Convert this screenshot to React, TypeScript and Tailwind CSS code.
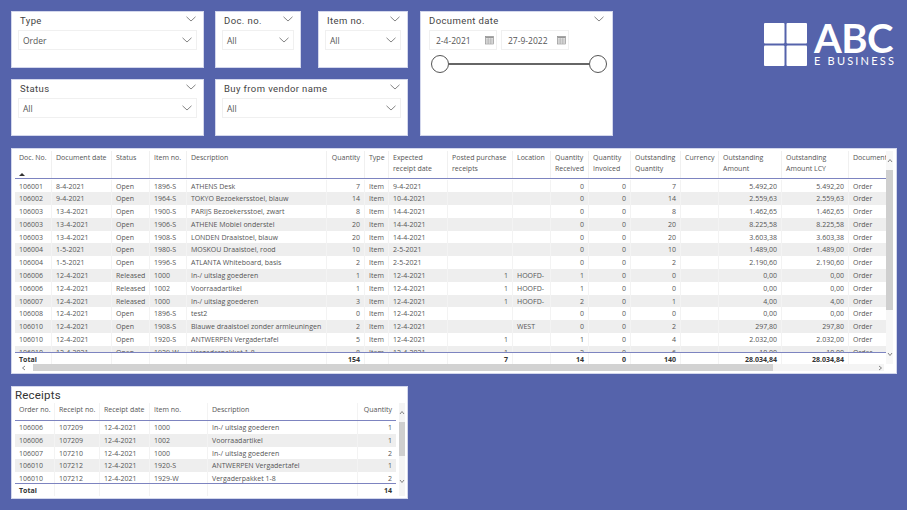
import React from "react";

const mainCols = "grid grid-cols-[37px_60px_38px_37px_140px_38px_24px_59px_65px_38px_38px_42px_50px_38px_63px_67px_37px]";
const receiptCols = "grid grid-cols-[40px_45px_50px_58px_150px_38px]";

// r = right aligned column
const mainHeader = [
  { t: "Doc. No." },
  { t: "Document date" },
  { t: "Status" },
  { t: "Item no." },
  { t: "Description" },
  { t: "Quantity", r: true },
  { t: "Type" },
  { t: "Expected receipt date" },
  { t: "Posted purchase receipts" },
  { t: "Location" },
  { t: "Quantity Received" },
  { t: "Quantity Invoiced" },
  { t: "Outstanding Quantity" },
  { t: "Currency" },
  { t: "Outstanding Amount" },
  { t: "Outstanding Amount LCY" },
  { t: "Document" },
];
const mainRight = [5, 8, 10, 11, 12, 14, 15];

const mainRows = [
  ["106001", "8-4-2021", "Open", "1896-S", "ATHENS Desk", "7", "Item", "9-4-2021", "", "", "0", "0", "7", "", "5.492,20", "5.492,20", "Order"],
  ["106002", "9-4-2021", "Open", "1964-S", "TOKYO Bezoekersstoel, blauw", "14", "Item", "10-4-2021", "", "", "0", "0", "14", "", "2.559,63", "2.559,63", "Order"],
  ["106003", "13-4-2021", "Open", "1900-S", "PARIJS Bezoekersstoel, zwart", "8", "Item", "14-4-2021", "", "", "0", "0", "8", "", "1.462,65", "1.462,65", "Order"],
  ["106003", "13-4-2021", "Open", "1906-S", "ATHENE Mobiel onderstel", "20", "Item", "14-4-2021", "", "", "0", "0", "20", "", "8.225,58", "8.225,58", "Order"],
  ["106003", "13-4-2021", "Open", "1908-S", "LONDEN Draaistoel, blauw", "20", "Item", "14-4-2021", "", "", "0", "0", "20", "", "3.603,38", "3.603,38", "Order"],
  ["106004", "1-5-2021", "Open", "1980-S", "MOSKOU Draaistoel, rood", "10", "Item", "2-5-2021", "", "", "0", "0", "10", "", "1.489,00", "1.489,00", "Order"],
  ["106004", "1-5-2021", "Open", "1996-S", "ATLANTA Whiteboard, basis", "2", "Item", "2-5-2021", "", "", "0", "0", "2", "", "2.190,60", "2.190,60", "Order"],
  ["106006", "12-4-2021", "Released", "1000", "In-/ uitslag goederen", "1", "Item", "12-4-2021", "1", "HOOFD-", "1", "0", "0", "", "0,00", "0,00", "Order"],
  ["106006", "12-4-2021", "Released", "1002", "Voorraadartikel", "1", "Item", "12-4-2021", "1", "HOOFD-", "1", "0", "0", "", "0,00", "0,00", "Order"],
  ["106007", "12-4-2021", "Released", "1000", "In-/ uitslag goederen", "3", "Item", "12-4-2021", "1", "HOOFD-", "2", "0", "1", "", "4,00", "4,00", "Order"],
  ["106008", "12-4-2021", "Open", "1896-S", "test2", "0", "Item", "12-4-2021", "", "", "0", "0", "0", "", "0,00", "0,00", "Order"],
  ["106010", "12-4-2021", "Open", "1908-S", "Blauwe draaistoel zonder armleuningen", "2", "Item", "12-4-2021", "", "WEST", "0", "0", "2", "", "297,80", "297,80", "Order"],
  ["106010", "12-4-2021", "Open", "1920-S", "ANTWERPEN Vergadertafel", "5", "Item", "12-4-2021", "1", "", "1", "0", "4", "", "2.032,00", "2.032,00", "Order"],
  ["106010", "12-4-2021", "Open", "1929-W", "Vergaderpakket 1-8", "8", "Item", "12-4-2021", "1", "", "2", "0", "6", "", "10,00", "10,00", "Order"],
];
const mainTotal = ["Total", "", "", "", "", "154", "", "", "7", "", "14", "0", "140", "", "28.034,84", "28.034,84", ""];

const receiptHeader = ["Order no.", "Receipt no.", "Receipt date", "Item no.", "Description", "Quantity"];
const receiptRows = [
  ["106006", "107209", "12-4-2021", "1000", "In-/ uitslag goederen", "1"],
  ["106006", "107209", "12-4-2021", "1002", "Voorraadartikel", "1"],
  ["106007", "107210", "12-4-2021", "1000", "In-/ uitslag goederen", "2"],
  ["106010", "107212", "12-4-2021", "1920-S", "ANTWERPEN Vergadertafel", "1"],
  ["106010", "107212", "12-4-2021", "1929-W", "Vergaderpakket 1-8", "2"],
];
const receiptTotal = ["Total", "", "", "", "", "14"];

function Chevron({ className = "" }: { className?: string }) {
  return (
    <svg viewBox="0 0 10 6" className={`w-[10px] h-[6px] shrink-0 ${className}`} fill="none" stroke="#777" strokeWidth="0.9">
      <polyline points="0.5,0.8 5,5 9.5,0.8" />
    </svg>
  );
}

function Arrow({ dir }: { dir: "up" | "down" | "left" | "right" }) {
  const pts = {
    up: "1,4 3,1.5 5,4",
    down: "1,2 3,4.5 5,2",
    left: "4,1 1.5,3 4,5",
    right: "2,1 4.5,3 2,5",
  }[dir];
  return (
    <svg viewBox="0 0 6 6" className="w-[6px] h-[6px]" fill="none" stroke="#666" strokeWidth="0.8">
      <polyline points={pts} />
    </svg>
  );
}

function CalendarIcon() {
  return (
    <svg viewBox="0 0 9 9" className="w-[9px] h-[9px] shrink-0" fill="none" stroke="#888" strokeWidth="0.6">
      <rect x="0.5" y="0.5" width="8" height="7.5" fill="#e8e8e8" />
      <rect x="0.5" y="0.5" width="8" height="1.6" fill="#999" stroke="none" />
      <path d="M3.2 2.1v5.9M5.8 2.1v5.9M0.5 4h8M0.5 6h8" strokeWidth="0.4" />
    </svg>
  );
}

function Slicer({ label, value, className }: { label: string; value: string; className: string }) {
  return (
    <div className={`bg-white border border-[#d3d7ec] h-[57px] px-[6px] ${className}`}>
      <div className="flex items-start justify-between h-[18px] pt-[2px] pl-[2px] pr-[1px]">
        <span className="text-[9.5px] leading-[14px] tracking-[0.4px] text-[#444] font-['Roboto',sans-serif]">{label}</span>
        <Chevron className="mt-[2px]" />
      </div>
      <div className="flex items-center justify-between h-[20px] border border-[#f0f0f0] pl-[4px] pr-[4px]">
        <span className="text-[8.5px] leading-[12px] pt-[1px] text-[#555]">{value}</span>
        <Chevron />
      </div>
    </div>
  );
}

function Cell({ text, right, bold, last }: { text: string; right?: boolean; bold?: boolean; last?: boolean }) {
  return (
    <div
      className={`px-[4px] overflow-hidden whitespace-nowrap leading-[13px] ${right ? "text-right" : ""} ${bold ? "font-bold text-[#333]" : ""} ${last ? "" : "border-r border-[#f3f3f3]"}`}
    >
      {text}
    </div>
  );
}

function BodyRows({ rows, cols, right }: { rows: string[][]; cols: string; right: number[] }) {
  return (
    <>
      {rows.map((row, i) => (
        <div key={i} className={`${cols} h-[12.8px] ${i % 2 === 1 ? "bg-[#eeeeee]" : "bg-white"}`}>
          {row.map((v, j) => (
            <Cell key={j} text={v} right={right.includes(j)} last={j === row.length - 1} />
          ))}
        </div>
      ))}
    </>
  );
}

function DateBox({ value }: { value: string }) {
  return (
    <div className="w-[68px] h-[20px] border border-[#f0f0f0] flex items-center justify-between pl-[6px] pr-[2px]">
      <span className="text-[8.5px] leading-[12px] pt-[1px] text-[#555]">{value}</span>
      <CalendarIcon />
    </div>
  );
}

function Logo() {
  return (
    <div className="flex gap-[7px] ml-[151px] mt-[12px] h-[43px]">
      <svg viewBox="0 0 43 43" className="w-[43px] h-[43px]" fill="#fff">
        <rect x="0" y="0" width="20.5" height="20.5" rx="1" />
        <rect x="22.5" y="0" width="20.5" height="20.5" rx="1" />
        <rect x="0" y="22.5" width="20.5" height="20.5" rx="1" />
        <rect x="22.5" y="22.5" width="20.5" height="20.5" rx="1" />
      </svg>
      <div className="flex flex-col -mt-[3px] text-white font-['Lato',sans-serif]">
        <span className="text-[40px] leading-[36px] h-[36px] font-bold tracking-[-0.5px]">ABC</span>
        <span className="text-[11px] leading-[10px] h-[10px] tracking-[2.2px] whitespace-nowrap">E BUSINESS</span>
      </div>
    </div>
  );
}

export default function App() {
  return (
    <div className="w-[907px] h-[510px] overflow-hidden bg-[#5563ab] pt-[11px] pl-[11px] font-['Open_Sans',sans-serif]">
      {/* Slicers */}
      <div className="flex h-[125px]">
        <div className="w-[397px] flex flex-col gap-[11px]">
          <div className="flex">
            <Slicer label="Type" value="Order" className="w-[193px]" />
            <Slicer label="Doc. no." value="All" className="w-[86px] ml-[11px]" />
            <Slicer label="Item no." value="All" className="w-[90px] ml-[17px]" />
          </div>
          <div className="flex">
            <Slicer label="Status" value="All" className="w-[193px]" />
            <Slicer label="Buy from vendor name" value="All" className="w-[193px] ml-[11px]" />
          </div>
        </div>
        <div className="w-[193px] h-[125px] ml-[12px] bg-white border border-[#d3d7ec] px-[8px]">
          <div className="flex items-start justify-between h-[18px] pt-[2px]">
            <span className="text-[9.5px] leading-[14px] tracking-[0.4px] text-[#444] font-['Roboto',sans-serif]">Document date</span>
            <Chevron className="mt-[2px]" />
          </div>
          <div className="flex gap-[4px]">
            <DateBox value="2-4-2021" />
            <DateBox value="27-9-2022" />
          </div>
          <div className="flex items-center mt-[5px] ml-[2px] -mr-[3px]">
            <div className="w-[18px] h-[18px] rounded-full border-[1.5px] border-[#555] bg-white shrink-0" />
            <div className="flex-1 h-[2px] bg-[#666]" />
            <div className="w-[18px] h-[18px] rounded-full border-[1.5px] border-[#555] bg-white shrink-0" />
          </div>
        </div>
        <Logo />
      </div>

      {/* Main table */}
      <div className="w-[886px] h-[226px] mt-[12px] bg-white border border-[#d3d7ec] pt-[2px] pl-[3px] flex flex-col text-[7px] text-[#555]">
        <div className="flex h-[213px]">
          <div className="w-[871px] flex flex-col">
            <div className={`${mainCols} h-[28px] border-b border-[#7d84c0]`}>
              {mainHeader.map((h, i) => (
                <div
                  key={h.t}
                  className={`flex flex-col px-[4px] pt-[1px] leading-[11px] overflow-hidden ${h.r ? "text-right" : ""} ${i === mainHeader.length - 1 ? "whitespace-nowrap" : "border-r border-[#f0f0f0]"}`}
                >
                  {h.t}
                  {i === 0 && (
                    <svg viewBox="0 0 6 3" className="w-[6px] h-[3px] mt-[10px] shrink-0" fill="#333">
                      <polygon points="0,3 3,0 6,3" />
                    </svg>
                  )}
                </div>
              ))}
            </div>
            <div className="h-[173px] pt-[0.5px] overflow-hidden">
              <BodyRows rows={mainRows} cols={mainCols} right={mainRight} />
            </div>
            <div className={`${mainCols} h-[12px] border-t border-[#7d84c0]`}>
              {mainTotal.map((v, j) => (
                <Cell key={j} text={v} bold right={j !== 0} last={j === mainTotal.length - 1} />
              ))}
            </div>
          </div>
          {/* vertical scrollbar */}
          <div className="w-[7px] flex flex-col items-center bg-[#f7f7f7]">
            <div className="h-[19px] flex items-center"><Arrow dir="up" /></div>
            <div className="w-full h-[140px] bg-[#cfcfcf]" />
            <div className="flex-1" />
            <div className="h-[20px] flex items-center"><Arrow dir="down" /></div>
          </div>
        </div>
        {/* horizontal scrollbar */}
        <div className="flex items-center h-[7px] w-[869px]">
          <div className="w-[18px] flex justify-center"><Arrow dir="left" /></div>
          <div className="w-[740px] h-full bg-[#d2d2d2]" />
          <div className="flex-1 h-full bg-[#f4f4f4] flex items-center justify-end pr-[1px]"><Arrow dir="right" /></div>
        </div>
      </div>

      {/* Receipts */}
      <div className="w-[397px] h-[113px] mt-[12px] bg-white border border-[#d3d7ec] pl-[3px] text-[7px] text-[#555]">
        <div className="h-[16px] pt-[1px] text-[11.5px] leading-[14px] tracking-[0.2px] text-[#333] font-['Roboto',sans-serif]">Receipts</div>
        <div className="flex">
          <div className="w-[381px] flex flex-col">
            <div className={`${receiptCols} h-[18px] border-b border-[#7d84c0]`}>
              {receiptHeader.map((h, i) => (
                <Cell key={h} text={h} right={i === 5} last={i === 5} />
              ))}
            </div>
            <div className="h-[62px] overflow-hidden">
              <BodyRows rows={receiptRows} cols={receiptCols} right={[5]} />
            </div>
            <div className={`${receiptCols} h-[13px] border-t border-[#7d84c0]`}>
              {receiptTotal.map((v, j) => (
                <Cell key={j} text={v} bold right={j === 5} last={j === 5} />
              ))}
            </div>
          </div>
          <div className="w-[6px] ml-[3px] flex flex-col items-center bg-[#f4f4f4]">
            <div className="h-[19px] flex items-center"><Arrow dir="up" /></div>
            <div className="w-full h-[34px] bg-[#cfcfcf]" />
            <div className="flex-1 flex items-end pb-[12px]"><Arrow dir="down" /></div>
          </div>
        </div>
      </div>
    </div>
  );
}
